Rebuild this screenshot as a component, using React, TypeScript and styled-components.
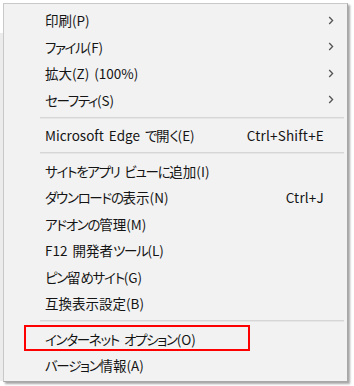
import React from "react";
import styled, { createGlobalStyle } from "styled-components";

const Global = createGlobalStyle`
  html, body { margin: 0; padding: 0; background: #ffffff; }
  body { font-family: "Noto Sans CJK JP", "Noto Sans", sans-serif; }
`;

const Page = styled.div`
  padding: 3px 0 0 3px;
  min-height: 386px;
  box-sizing: border-box;
  background: linear-gradient(#ececec, #ececec) no-repeat 0 33px / 3px 348px;
`;

const Menu = styled.div`
  width: 345px;
  box-sizing: border-box;
  background: #f2f2f2;
  border: 1px solid #c9c9c9;
  border-right-color: #a8a8a8;
  border-bottom-color: #a8a8a8;
  box-shadow: 2px 2px 2px rgba(0, 0, 0, 0.35);
  padding: 3px 0 2px 0;
  font-family: "Noto Sans CJK JP", "Noto Sans", sans-serif;
  font-feature-settings: "palt";
  font-size: 13.5px;
  color: #141414;
`;

const Row = styled.div`
  position: relative;
  display: flex;
  align-items: center;
  height: 26.5px;
  padding: 0 9px 0 41px;
  white-space: nowrap;
`;

const Label = styled.span`
  flex: 1;
  word-spacing: 2px;
`;

const Kana = styled.span`
  letter-spacing: -1.3px;
`;

const Shortcut = styled.span`
  letter-spacing: 0.2px;
`;

const ArrowCell = styled.span`
  width: 14px;
  display: flex;
  justify-content: center;
  align-items: center;
`;

const Separator = styled.div`
  height: 9px;
  display: flex;
  align-items: center;
  padding: 0 3px 0 36px;
  &::before {
    content: "";
    flex: 1;
    height: 1px;
    background: #d6d6d6;
    border-bottom: 1px solid #e6e6e6;
  }
`;

const Highlight = styled.div`
  position: absolute;
  left: 20px;
  top: -1px;
  width: 226px;
  height: 26px;
  box-sizing: border-box;
  border: 2px solid #ff0000;
  pointer-events: none;
`;

const Chevron = () => (
  <svg width="6" height="9" viewBox="0 0 6 9">
    <path d="M1.2 1 L4.6 4.5 L1.2 8" fill="none" stroke="#555" strokeWidth="1.3" />
  </svg>
);

const renderLabel = (text: string) =>
  text.split(/([\u3040-\u30ff]+)/).map((part, i) =>
    /^[\u3040-\u30ff]+$/.test(part) ? <Kana key={i}>{part}</Kana> : <React.Fragment key={i}>{part}</React.Fragment>
  );

type Item = { label: string; shortcut?: string; arrow?: boolean; highlight?: boolean } | "sep";

const items: Item[] = [
  { label: "印刷(P)", arrow: true },
  { label: "ファイル(F)", arrow: true },
  { label: "拡大(Z) (100%)", arrow: true },
  { label: "セーフティ(S)", arrow: true },
  "sep",
  { label: "Microsoft Edge で開く(E)", shortcut: "Ctrl+Shift+E" },
  "sep",
  { label: "サイトをアプリ ビューに追加(I)" },
  { label: "ダウンロードの表示(N)", shortcut: "Ctrl+J" },
  { label: "アドオンの管理(M)" },
  { label: "F12 開発者ツール(L)" },
  { label: "ピン留めサイト(G)" },
  { label: "互換表示設定(B)" },
  "sep",
  { label: "インターネット オプション(O)", highlight: true },
  { label: "バージョン情報(A)" },
];

export default function App() {
  return (
    <Page>
      <Global />
      <Menu>
        {items.map((it, i) =>
          it === "sep" ? (
            <Separator key={i} />
          ) : (
            <Row key={i}>
              <Label>{renderLabel(it.label)}</Label>
              {it.shortcut && <Shortcut>{it.shortcut}</Shortcut>}
              <ArrowCell>{it.arrow && <Chevron />}</ArrowCell>
              {it.highlight && <Highlight />}
            </Row>
          )
        )}
      </Menu>
    </Page>
  );
}
